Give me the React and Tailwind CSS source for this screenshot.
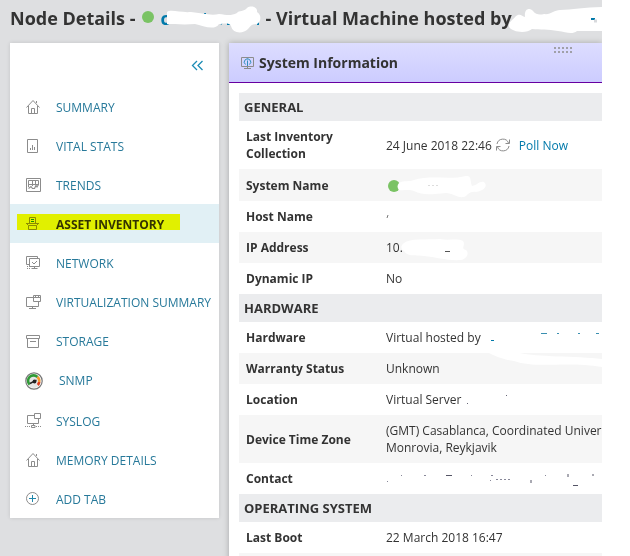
import React from "react";

const HomeIcon = () => (
  <svg width="17" height="17" fill="none" stroke="#8c8c8c" aria-hidden="true">
    <path d="M.5 9.5 L7 2.5 L13.5 9.5 M2.5 8 V15.5 H11.5 V8 M5.5 15.5 V10.5 H8.5 V15.5 M10.5 3 V5" />
  </svg>
);

const StatsIcon = () => (
  <svg width="17" height="17" fill="none" stroke="#8c8c8c" aria-hidden="true">
    <path d="M1.5 2.5 H11.5 V15.5 H1.5 Z M4.5 11 V13 M6.5 8 V13 M8.5 10 V13" />
  </svg>
);

const TrendsIcon = () => (
  <svg width="17" height="17" fill="none" stroke="#8c8c8c" aria-hidden="true">
    <path d="M.5 2.5 H14.5 V15.5 H.5 Z M2.5 11 V4.5 H12.5 V9 M6.5 4.5 V10 M9.5 4.5 V9 M2.5 8.5 H12.5" />
    <path d="M2.5 12.5 L5 10.5 L6.5 12.5 L8.5 12.5 L10 9.5 L11 11 L12.5 8.5" strokeWidth="1.2" />
  </svg>
);

const AssetIcon = () => (
  <svg width="17" height="17" fill="none" stroke="#8c8c8c" aria-hidden="true">
    <path d="M3.5 8.5 V2.5 H9.5 V8.5 M0 8.5 H13 M.5 8.5 L2.5 10.5 M12.5 8.5 L10.5 10.5 M2.5 10.5 H10.5 V14.5 H2.5 Z" />
    <path d="M5 4.5 H8 M5 6.5 H8" stroke="#1690b5" />
  </svg>
);

const NetworkIcon = () => (
  <svg width="17" height="17" fill="none" stroke="#8c8c8c" aria-hidden="true">
    <path d="M3 10.5 H.5 V2.5 H11.5 V4.5 M3.5 4.5 H13.5 V12.5 H3.5 Z M8.5 12.5 V14.5 M5.5 14.5 H11.5" />
    <path d="M6 8 L8 10 L11 7" />
    <path d="M1 12.5 H4 M1 14.5 H5" strokeDasharray="1 1" />
  </svg>
);

const VirtualIcon = () => (
  <svg width="17" height="17" fill="none" stroke="#8c8c8c" aria-hidden="true">
    <path d="M7.5 4.5 H.5 V13.5 H12.5 V9 M7.5 2.5 H14.5 V8.5 H7.5 Z M7.5 4.5 H14.5 M9.5 2.5 V4.5 M12.5 2.5 V4.5 M3 15.5 H10 M6.5 13.5 V15.5" />
  </svg>
);

const StorageIcon = () => (
  <svg width="17" height="17" fill="none" stroke="#8c8c8c" aria-hidden="true">
    <path d="M.5 3.5 H13.5 V6.5 H.5 Z M1.5 6.5 V15.5 H12.5 V6.5 M4 9.5 H10" />
  </svg>
);

const GaugeIcon = () => (
  <svg width="18" height="18" fill="none" aria-hidden="true">
    <circle cx="9" cy="9" r="8.2" fill="#fff" stroke="#777" strokeWidth="1.2" />
    <circle cx="9" cy="9" r="6.9" fill="#e5e5e5" />
    <path d="M4.6 12.6 A5.4 5.4 0 0 1 12.4 5" stroke="#2f9a35" strokeWidth="2.6" />
    <path d="M12.4 5 A5.4 5.4 0 0 1 14.2 10" stroke="#f59a2c" strokeWidth="2.4" />
    <path d="M14.2 10 A5.4 5.4 0 0 1 12.8 13" stroke="#e23b1e" strokeWidth="2.6" />
    <path d="M5 11.5 L9 9.5 L11.5 8" stroke="#222" strokeWidth="1.4" />
    <circle cx="9.5" cy="9.5" r="1.9" fill="#222" />
  </svg>
);

const SyslogIcon = () => (
  <svg width="17" height="17" fill="none" stroke="#8c8c8c" className="overflow-visible" aria-hidden="true">
    <path d="M8.5 3.5 H1.5 V11.5 H12.5 V6.5 M8.5 1.5 H14.5 V6.5 H8.5 Z M7.5 11.5 V13 M5.5 13.5 H9 V15.5 H5.5 Z" />
    <path d="M-1 14.5 H5 M10 14.5 H16" strokeDasharray="1 1" />
  </svg>
);

const AddIcon = () => (
  <svg width="17" height="17" fill="none" aria-hidden="true">
    <circle cx="6.5" cy="8.5" r="6" stroke="#8c8c8c" />
    <path d="M3 8.5 H10 M6.5 5 V12" stroke="#1f86ab" />
  </svg>
);

const NAV = [
  { label: "SUMMARY", Icon: HomeIcon },
  { label: "VITAL STATS", Icon: StatsIcon },
  { label: "TRENDS", Icon: TrendsIcon },
  { label: "ASSET INVENTORY", Icon: AssetIcon, active: true },
  { label: "NETWORK", Icon: NetworkIcon },
  { label: "VIRTUALIZATION SUMMARY", Icon: VirtualIcon },
  { label: "STORAGE", Icon: StorageIcon },
  { label: "SNMP", Icon: GaugeIcon, wide: true },
  { label: "SYSLOG", Icon: SyslogIcon },
  { label: "MEMORY DETAILS", Icon: HomeIcon },
  { label: "ADD TAB", Icon: AddIcon },
];

const StatusDot = () => (
  <span className="inline-block size-3 shrink-0 rounded-full bg-[#7ac364]" role="img" aria-label="Up" />
);

const NavItem = ({ item }) => {
  const { label, Icon, active, wide } = item;
  return (
    <li className={`relative ${active ? "bg-[#e1f0f5]" : ""} ${wide ? "h-[41px]" : "h-[39px]"}`}>
      <a
        href="#"
        aria-current={active ? "page" : undefined}
        className={`flex h-full items-start whitespace-nowrap text-xs ${wide ? "pl-[15px]" : "pl-4"} ${
          active ? "font-bold text-[#333]" : "text-[#27799a]"
        }`}
      >
        <span className={`flex shrink-0 ${wide ? "w-[34px] pt-3" : "w-[30px] pt-[11px]"}`}>
          <Icon />
        </span>
        <span className="pt-[13px]">{label}</span>
      </a>
      {active && (
        <span className="pointer-events-none absolute left-[7px] top-[10px] h-4 w-[163px] bg-[#ffff00] mix-blend-multiply" />
      )}
    </li>
  );
};

const Sidebar = () => (
  <nav className="w-[209px] shrink-0 bg-white shadow-[0_0_4px_rgba(0,0,0,0.12)]">
    <div className="flex h-11 items-center justify-end pr-4">
      <button type="button" aria-label="Collapse menu">
        <svg width="12" height="11" fill="none" stroke="#1c8cb5" strokeWidth="1.3">
          <path d="M6 1 L1.5 5.5 L6 10 M11.5 1 L7 5.5 L11.5 10" />
        </svg>
      </button>
    </div>
    <ul>
      {NAV.map((item) => (
        <NavItem key={item.label} item={item} />
      ))}
    </ul>
  </nav>
);

const Section = ({ title, children }) => (
  <tbody>
    <tr className="bg-[#ebecee]">
      <th colSpan={2} className="h-7 px-[5px] text-left text-[13px] leading-4 font-bold">
        {title}
      </th>
    </tr>
    {children}
  </tbody>
);

const Row = ({ label, shaded, children }) => (
  <tr className={shaded ? "bg-[#f6f6f6]" : ""}>
    <th scope="row" className="py-[7px] pl-[7px] pr-4 text-left font-bold">
      {label}
    </th>
    <td className="relative whitespace-nowrap py-[7px]">{children}</td>
  </tr>
);

// white marker strokes laid over private values
const Marker = ({ className, width, height, children }) => (
  <svg
    className={`pointer-events-none absolute overflow-visible ${className}`}
    width={width}
    height={height}
    fill="none"
    aria-hidden="true"
  >
    {children}
  </svg>
);

const PageTitle = () => (
  <h1 className="flex h-[43px] items-center overflow-hidden whitespace-nowrap pb-[7px] pl-[10px] text-lg font-bold">
    <span>Node Details -</span>
    <span className="mb-[2px] ml-[6px] mr-[7px] flex">
      <StatusDot />
    </span>
    <span className="relative w-[105px]">
      <a href="#" className="text-[#0079aa]">
        c
      </a>
      <Marker className="left-0 top-0" width="106" height="28">
        <path d="M44 9 V13 M97 13 V21" stroke="#0079aa" strokeWidth="2" />
        <path d="M58 18 L61 20 M66 20 H70" stroke="#0079aa" strokeWidth="2" />
        <path
          d="M6 8 C10 5 20 9 30 8 C40 9 50 12 58 10 C66 11 70 12 76 9 C78 6 83 8 86 4 C90 1 97 3 96 8 C101 11 100 18 96 20 C90 20 90 22 87 25 C82 30 72 30 70 22 C68 18 62 20 58 20 C54 27 42 22 34 20 C24 21 12 20 6 20 Z"
          fill="#fff"
        />
      </Marker>
    </span>
    <span className="relative">
      - Virtual Machine hosted by
      <Marker className="left-full top-0" width="92" height="28">
        <path
          d="M-3 23 C-4 18 1 16 4 12 C8 9 10 12 13 13 C12 5 17 3 21 7 C24 11 28 11 32 10 C39 11 42 6 48 6 C60 6 74 3 92 3 V27 H65 C60 31 54 28 46 27 C36 25 28 26 20 25 C14 30 0 28 -3 23 Z"
          fill="#fff"
        />
        <path d="M79 15 H83" stroke="#0079aa" strokeWidth="2" />
        <path d="M82 17 H85" stroke="#d7d9dc" strokeWidth="3" />
      </Marker>
    </span>
  </h1>
);

const DragHandle = () => (
  <svg className="absolute right-[30px] top-1" width="18" height="6" aria-hidden="true">
    <path d="M0 1 H18 M0 5 H18" stroke="#a0a0a8" strokeWidth="2" strokeDasharray="2 2" />
  </svg>
);

const SystemInformation = () => (
  <section className="min-w-0 flex-1 overflow-hidden bg-white">
    <header className="relative flex h-10 items-center border-b border-[#6600a0] bg-linear-to-b from-[#ddddff] to-[#ccccff] pl-3">
      <svg width="13" height="13" fill="none" stroke="#8c8c8c" aria-hidden="true">
        <path d="M.5 1.5 H12.5 V10.5 H.5 Z M3 12.5 H10 M6.5 10.5 V12.5" />
        <path d="M4.5 8.5 A3.2 3.2 0 1 1 8.5 8.5 M6.5 5 V10 M6.5 3.5 V4.5" stroke="#2f8fbd" />
      </svg>
      <h2 className="ml-[5px] text-sm font-bold">System Information</h2>
      <DragHandle />
    </header>
    <div className="overflow-hidden pl-[10px] pt-[10px]">
      <table className="w-full table-fixed border-collapse text-xs leading-[17px]">
        <colgroup>
          <col className="w-[147px]" />
          <col />
        </colgroup>
        <Section title="GENERAL">
          <Row label="Last Inventory Collection">
            <span className="flex items-center">
              24 June 2018 22:46
              <svg className="ml-1 mr-[9px]" width="14" height="14" fill="none" stroke="#8c8c8c" aria-hidden="true">
                <path d="M1 6 A6 6 0 0 1 12.5 5 M13 8 A6 6 0 0 1 1.5 9 M13.5 1.5 V5.5 H9.5 M.5 12.5 V8.5 H4.5" />
              </svg>
              <a href="#" className="text-[#0079aa]">
                Poll Now
              </a>
            </span>
          </Row>
          <Row label="System Name" shaded>
            <span className="flex h-[18px] items-center pl-[2px] pt-[2px]">
              <StatusDot />
            </span>
            <Marker className="left-0 top-0" width="110" height="31">
              <path
                d="M13 14 C18 11 24 13 28 11 C42 6 66 11 80 7 C86 6 84 13 86 17 C92 16 93 12 98 13 C103 18 96 22 90 23 C82 22 82 27 78 28 C70 29 67 24 60 24 C48 25 37 27 28 22 C22 20 18 22 13 21 C11 19 11 16 13 14 Z"
                fill="#fff"
              />
              <path d="M42 16.5 H52" stroke="#ddd" strokeDasharray="2 2" />
            </Marker>
          </Row>
          <Row label="Host Name">
            <Marker className="left-0 top-0" width="20" height="31">
              <path d="M2 14 L1 17" stroke="#777" />
            </Marker>
            &nbsp;
          </Row>
          <Row label="IP Address" shaded>
            10.
            <Marker className="left-0 top-0" width="90" height="31">
              <path
                d="M18 11 C24 6 40 8 54 7 C62 9 72 6 77 9 C80 13 74 17 80 18 C84 22 80 27 75 28 C62 29 50 25 38 24 C30 23 22 25 18 19 C14 17 15 13 18 11 Z"
                fill="#fff"
              />
              <path d="M59 19.5 H64" stroke="#555" />
            </Marker>
          </Row>
          <Row label="Dynamic IP">No</Row>
        </Section>
        <Section title="HARDWARE">
          <Row label="Hardware">
            Virtual hosted by
            <Marker className="left-0 top-0" width="216" height="31">
              <path d="M105 18.5 H108" stroke="#0079aa" />
              <path d="M155 11.5 H161 M171 11.5 H173 M192 11.5 H194 M210 11.5 H213" stroke="#3a8fb0" />
            </Marker>
          </Row>
          <Row label="Warranty Status" shaded>
            Unknown
            <Marker className="left-0 top-0" width="216" height="31">
              <path d="M103 0 C115 6 122 7 128 8 C150 16 180 8 216 14 V6 C190 3 150 4 134 0 Z" fill="#fff" />
            </Marker>
          </Row>
          <Row label="Location">
            Virtual Server
            <Marker className="left-0 top-0" width="216" height="31">
              <path d="M81 19.5 H82 M120 11.5 H121" stroke="#667" />
            </Marker>
          </Row>
          <Row label="Device Time Zone" shaded>
            (GMT) Casablanca, Coordinated Univer
            <br />
            Monrovia, Reykjavik
          </Row>
          <Row label="Contact">
            <Marker className="left-0 top-0" width="216" height="31">
              <path
                d="M1 18.5 H2 M15 12.5 H16 M38 12.5 H40 M85 12.5 H86 M105 12.5 H107 M159 12.5 H160 M104 17.5 H105 M110 16.5 H125"
                stroke="#889"
                strokeDasharray="2 2"
              />
              <path d="M60 12.5 H66 M145 17 V20 M182 11 V14 M207 11 V13 M187 22.5 H192" stroke="#556" />
            </Marker>
            &nbsp;
          </Row>
        </Section>
        <Section title="OPERATING SYSTEM">
          <Row label="Last Boot">22 March 2018 16:47</Row>
          <Row shaded>&nbsp;</Row>
        </Section>
      </table>
    </div>
  </section>
);

export default function App() {
  return (
    <div className="h-screen overflow-hidden bg-white pr-7 font-['Open_Sans',sans-serif] text-[#333]">
      <div className="flex min-h-screen flex-col bg-[#dedfe1]">
        <PageTitle />
        <main className="flex flex-1 pl-[10px]">
          <div className="mr-[10px]">
            <Sidebar />
          </div>
          <div className="flex min-w-0 flex-1 shadow-[0_0_6px_rgba(0,0,0,0.25)] [clip-path:inset(-8px_0_0_-8px)]">
            <SystemInformation />
          </div>
        </main>
      </div>
    </div>
  );
}
